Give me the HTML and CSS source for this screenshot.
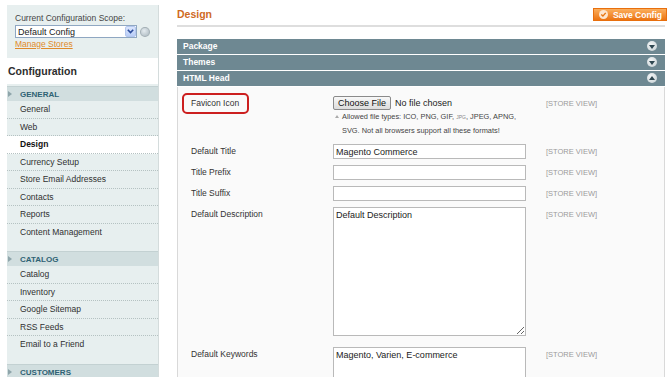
FILE: index.html
```html
<!DOCTYPE html>
<html lang="en">
<head>
    <meta charset="UTF-8">
    <title>Configuration / Design</title>
    <link rel="stylesheet" href="styles.css">
</head>
<body>
    <div class="page">
        <aside class="side">
            <div class="scope">
                <div class="scope-label">Current Configuration Scope:</div>
                <div class="scope-row">
                    <div class="scope-select">
                        <span>Default Config</span>
                        <span class="sel-arrow">
                            <svg width="7" height="5" viewBox="0 0 7 5"><path d="M0.8 0.8 L3.5 3.6 L6.2 0.8" fill="none" stroke="#2b4b9a" stroke-width="1.6"/></svg>
                        </span>
                    </div>
                    <span class="help"></span>
                </div>
                <a class="manage" href="#">Manage Stores</a>
            </div>

            <h3 class="cfg-title">Configuration</h3>

            <div class="nav-group first">
                <div class="nav-head"><span class="tri"></span>GENERAL</div>
                <ul class="nav-list">
                    <li>General</li>
                    <li>Web</li>
                    <li class="active">Design</li>
                    <li>Currency Setup</li>
                    <li>Store Email Addresses</li>
                    <li>Contacts</li>
                    <li>Reports</li>
                    <li>Content Management</li>
                </ul>
            </div>
            <div class="nav-group">
                <div class="nav-head"><span class="tri"></span>CATALOG</div>
                <ul class="nav-list">
                    <li>Catalog</li>
                    <li>Inventory</li>
                    <li>Google Sitemap</li>
                    <li>RSS Feeds</li>
                    <li>Email to a Friend</li>
                </ul>
            </div>
            <div class="nav-group">
                <div class="nav-head"><span class="tri"></span>CUSTOMERS</div>
            </div>
        </aside>

        <main class="main">
            <div class="head">
                <h3 class="title">Design</h3>
                <button class="save">
                    <svg class="save-icon" width="9" height="9" viewBox="0 0 9 9"><circle cx="4.5" cy="4.5" r="4.5" fill="#fde6cf"/><path d="M2.3 4.6 L3.9 6.1 L6.7 2.9" fill="none" stroke="#e8750f" stroke-width="1.4"/></svg>
                    Save Config
                </button>
            </div>

            <div class="bar">Package<span class="toggle"><span class="tri-down"></span></span></div>
            <div class="bar">Themes<span class="toggle"><span class="tri-down"></span></span></div>
            <div class="bar">HTML Head<span class="toggle"><span class="tri-up"></span></span></div>

            <div class="fieldset">
                <div class="form">
                    <div class="label"><span class="marked">Favicon Icon</span></div>
                    <div class="value">
                        <div class="file-line">
                            <span class="file-btn">Choose File</span>
                            <span class="file-name">No file chosen</span>
                        </div>
                        <div class="note"><span class="note-bullet"></span>Allowed file types: ICO, PNG, GIF, <span class="tiny">JPG</span>, JPEG, APNG,</div>
                        <div class="note">SVG. Not all browsers support all these formats!</div>
                    </div>
                    <div class="scope-cell">[STORE VIEW]</div>

                    <div class="label">Default Title</div>
                    <div class="value"><input class="text" type="text" value="Magento Commerce"></div>
                    <div class="scope-cell">[STORE VIEW]</div>

                    <div class="label">Title Prefix</div>
                    <div class="value"><input class="text" type="text" value=""></div>
                    <div class="scope-cell">[STORE VIEW]</div>

                    <div class="label">Title Suffix</div>
                    <div class="value"><input class="text" type="text" value=""></div>
                    <div class="scope-cell">[STORE VIEW]</div>

                    <div class="label">Default Description</div>
                    <div class="value"><textarea class="area">Default Description</textarea></div>
                    <div class="scope-cell">[STORE VIEW]</div>

                    <div class="label keywords">Default Keywords</div>
                    <div class="value keywords"><textarea class="area">Magento, Varien, E-commerce</textarea></div>
                    <div class="scope-cell keywords">[STORE VIEW]</div>
                </div>
            </div>
        </main>
    </div>
</body>
</html>
```

FILE: styles.css
```css
* {
    margin: 0;
    padding: 0;
    box-sizing: border-box;
}

html, body {
    height: 377px;
    overflow: hidden;
}

body {
    background: #fff;
    font-family: 'Liberation Sans', Arial, sans-serif;
    font-size: 8.5px;
    color: #2f2f2f;
}

.page {
    display: flex;
    gap: 19px;
    padding-left: 7px;
    height: 100%;
}

/* ---------- sidebar ---------- */

.side {
    width: 151px;
    flex-shrink: 0;
    background: #e7efef;
    box-shadow: 1px 0 0 #d4dcdc;
    margin-top: 5px;
}

.scope {
    height: 52px;
    padding: 7px 8px 0 8px;
    color: #444;
}

.scope-label {
    line-height: 12px;
}

.scope-row {
    display: flex;
    align-items: center;
    gap: 3px;
    margin-top: 1px;
}

.scope-select {
    width: 125px;
    height: 13px;
    display: flex;
    align-items: center;
    justify-content: space-between;
    background: #fff;
    border: 1px solid #8fa7c2;
    padding-left: 2px;
    font-size: 9px;
    color: #222;
}

.sel-arrow {
    width: 11px;
    height: 11px;
    display: flex;
    align-items: center;
    justify-content: center;
    background: linear-gradient(#dbe6fd, #b9cdf6);
    border: 1px solid #b3c6ee;
    border-radius: 2px;
}

.help {
    width: 10px;
    height: 10px;
    border-radius: 50%;
    background: radial-gradient(circle at 40% 35%, #e4ebef, #a9b6bd);
    border: 1px solid #a3afb5;
}

.manage {
    display: block;
    margin-top: 1px;
    line-height: 11px;
    color: #e08a2a;
    text-decoration: underline;
}

.cfg-title {
    height: 26px;
    line-height: 27px;
    margin-top: 1px;
    padding-left: 1px;
    background: #fff;
    font-size: 10.5px;
    font-weight: bold;
    color: #2d2d2d;
}

.nav-group {
    padding-bottom: 10px;
}

.nav-group.first {
    margin-top: 2px;
}

.nav-head {
    height: 15px;
    line-height: 15px;
    padding-left: 13px;
    position: relative;
    background: #d1dedf;
    border-top: 1px solid #c3d1d2;
    font-size: 8px;
    font-weight: bold;
    color: #2e6274;
}

.tri {
    position: absolute;
    left: 1px;
    top: 4px;
    border-left: 4px solid #8ea5aa;
    border-top: 3px solid transparent;
    border-bottom: 3px solid transparent;
}

.nav-list {
    list-style: none;
}

.nav-list li {
    height: 17.5px;
    line-height: 17px;
    padding-left: 13px;
    border-bottom: 1px dotted #b5c2c2;
}

.nav-list li:last-child {
    border-bottom: none;
}

.nav-list li.active {
    background: #fff;
    font-weight: bold;
    color: #111;
}

/* ---------- main ---------- */

.main {
    flex: 1;
    margin-right: 5px;
    display: flex;
    flex-direction: column;
}

.head {
    flex-shrink: 0;
    height: 27px;
    display: flex;
    justify-content: space-between;
    align-items: flex-start;
    padding-top: 8px;
    border-bottom: 2px solid #dedede;
    margin-bottom: 12px;
}

.title {
    font-size: 10.5px;
    font-weight: bold;
    color: #cf6a1f;
    line-height: 13px;
}

.save {
    display: flex;
    align-items: center;
    gap: 5px;
    height: 13px;
    margin-right: -2px;
    padding: 0 4px 0 5px;
    background: linear-gradient(#fbae5c, #ec7412);
    border: 1px solid #e86f0d;
    font-family: inherit;
    font-size: 8.5px;
    font-weight: bold;
    color: #fff;
}

.save-icon {
    display: block;
}

.bar {
    flex-shrink: 0;
    height: 14.5px;
    line-height: 14.5px;
    margin-bottom: 1.5px;
    padding-left: 6px;
    display: flex;
    justify-content: space-between;
    align-items: center;
    background: #6e8892;
    color: #fff;
    font-weight: bold;
}

.toggle {
    width: 10px;
    height: 10px;
    margin-right: 8px;
    border-radius: 50%;
    background: radial-gradient(circle at 40% 35%, #f4f6f7, #c3cdd1);
    display: flex;
    align-items: center;
    justify-content: center;
}

.tri-down {
    border-top: 4px solid #2e4650;
    border-left: 3px solid transparent;
    border-right: 3px solid transparent;
    margin-top: 1px;
}

.tri-up {
    border-bottom: 4px solid #2e4650;
    border-left: 3px solid transparent;
    border-right: 3px solid transparent;
    margin-bottom: 1px;
}

.fieldset {
    flex: 1 0 auto;
    background: #fafafa;
    border: 1px solid #d9d9d9;
    border-top: none;
    padding: 9px 0 0 13px;
}

.form {
    display: grid;
    grid-template-columns: 142px 193px 1fr;
    row-gap: 6px;
}

.label {
    line-height: 15px;
    color: #333;
}

.marked {
    display: inline-block;
    margin: -3px 0 -3px -9px;
    padding: 1px 8px 1px 7px;
    border: 2px solid #cc1f1f;
    border-radius: 5px;
    line-height: 15px;
}

.scope-cell {
    padding-left: 20px;
    line-height: 15px;
    font-size: 7.5px;
    color: #9a9a9a;
}

.file-line {
    display: flex;
    align-items: center;
    gap: 4px;
    height: 14px;
}

.file-btn {
    height: 14px;
    line-height: 12px;
    padding: 0 4px;
    border: 1px solid #8a8a8a;
    border-radius: 2px;
    background: linear-gradient(#f8f8f8, #dcdcdc);
    font-size: 9px;
    color: #111;
}

.file-name {
    font-size: 9px;
    color: #222;
}

.note {
    line-height: 14px;
    font-size: 7.4px;
    color: #444;
    padding-left: 9px;
    position: relative;
}

.note-bullet {
    position: absolute;
    left: 2px;
    top: 5px;
    border-bottom: 3px solid #aaa;
    border-left: 2px solid transparent;
    border-right: 2px solid transparent;
}

.tiny {
    font-size: 5px;
    color: #888;
}

.text,
.area {
    display: block;
    width: 193px;
    border: 1px solid #b9b9b9;
    background: #fff;
    font-family: inherit;
    font-size: 9px;
    color: #222;
    padding: 0 2px;
    outline: none;
}

.text {
    height: 15px;
}

.area {
    height: 129px;
    padding-top: 2px;
    resize: vertical;
}

.keywords {
    margin-top: 5px;
}
```
